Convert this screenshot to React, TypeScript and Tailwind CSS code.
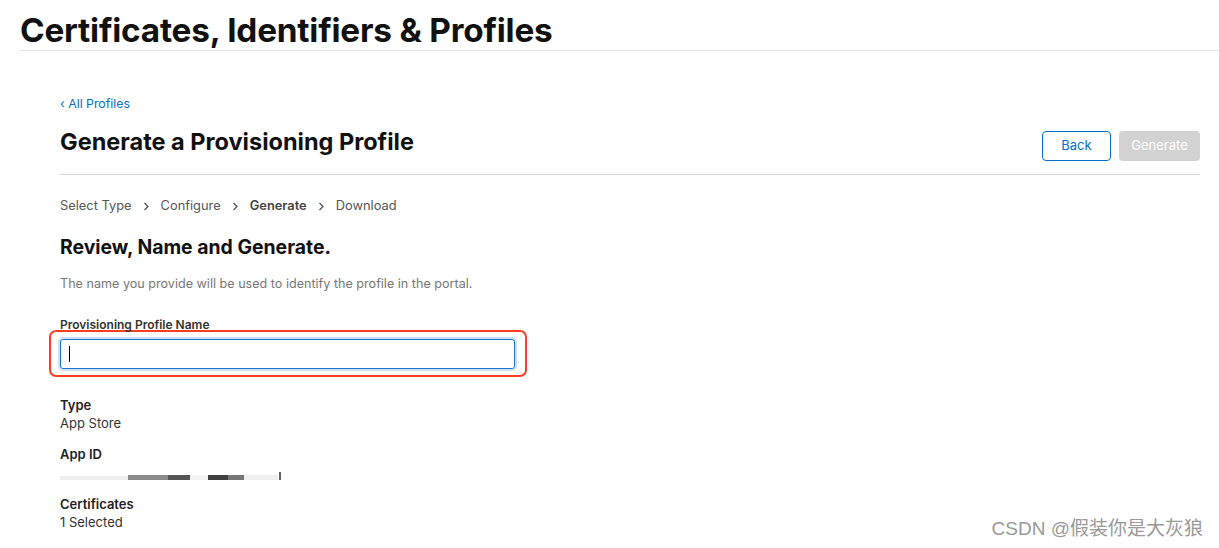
import React from "react";

function Chevron() {
  return (
    <svg width="7" height="9" viewBox="0 0 7 9" className="mx-[11px]" aria-hidden>
      <path d="M1.5 1 L5 4.5 L1.5 8" fill="none" stroke="#555" strokeWidth="1.3" />
    </svg>
  );
}

export default function App() {
  return (
    <div className="w-[1219px] h-[548px] bg-white overflow-hidden relative" style={{ fontFamily: "Inter, 'Noto Sans', sans-serif" }}>
      <div className="pl-[20px]">
        <h1 className="text-[33.3px] leading-[36px] font-bold text-[#111] pt-[12px] pb-[2px] tracking-[-0.2px]">
          Certificates, Identifiers &amp; Profiles
        </h1>
        <div className="h-px bg-[#e3e3e3]" />
      </div>

      <div className="ml-[60px] w-[1140px]">
        <div className="pt-[45px] text-[12.3px] leading-[16px] text-[#0070c9]">‹ All Profiles</div>
        <div className="flex items-center justify-between mt-[10px] pb-[12.5px] border-b border-[#d6d6d6]">
          <h2 className="text-[23.5px] leading-[30px] font-bold text-[#111]">Generate a Provisioning Profile</h2>
          <div className="flex gap-[8px] mt-[9px]">
            <button className="w-[69px] h-[30px] border border-[#0070c9] rounded-[4px] text-[#0070c9] text-[13px] bg-white">Back</button>
            <button className="w-[81px] h-[30px] rounded-[4px] bg-[#d2d2d2] text-white text-[13px]">Generate</button>
          </div>
        </div>

        <div className="flex items-center mt-[22.5px] text-[12.85px] leading-[18px] text-[#555]">
          <span>Select Type</span>
          <Chevron />
          <span>Configure</span>
          <Chevron />
          <span className="font-semibold text-[#444]">Generate</span>
          <Chevron />
          <span>Download</span>
        </div>

        <h3 className="mt-[20px] text-[19.4px] leading-[24px] font-bold text-[#111]">Review, Name and Generate.</h3>
        <p className="mt-[17px] text-[12.6px] leading-[16px] text-[#777]">The name you provide will be used to identify the profile in the portal.</p>

        <div className="mt-[25px] text-[12px] leading-[16px] font-semibold text-[#333]">Provisioning Profile Name</div>
        <div className="ml-[-11px] mt-[-3px] w-[478px] h-[47px] border-[2.5px] border-[#ff3d1f] rounded-[7px] flex items-center pl-[6.5px]">
          <div className="w-[459px] h-[34px] rounded-[5px] border-[2px] border-[#cfe1f4] flex">
            <div className="flex-1 border border-[#1a73c8] rounded-[3px] bg-white flex items-center pl-[8px]">
              <div className="w-px h-[16px] bg-black" />
            </div>
          </div>
        </div>

        <div className="mt-[19px] text-[13px] leading-[18px]">
          <div className="font-semibold text-[#222]">Type</div>
          <div className="text-[#333]">App Store</div>
          <div className="font-semibold text-[#222] mt-[13px]">App ID</div>
          <div className="h-[15px] relative">
            <div className="absolute left-0 top-[9px] flex items-end">
              <div className="w-[68px] h-[4px] bg-[#eeeeee]" />
              <div className="w-[40px] h-[5px] bg-[#8a8a8a]" />
              <div className="w-[22px] h-[5px] bg-[#555]" />
              <div className="w-[18px] h-[5px] bg-[#f3f3f3]" />
              <div className="w-[20px] h-[5px] bg-[#3f3f3f]" />
              <div className="w-[16px] h-[5px] bg-[#777]" />
              <div className="w-[34px] h-[5px] bg-[#f0f0f0]" />
              <div className="w-[2px] h-[8px] bg-[#666] ml-[1px]" />
            </div>
          </div>
          <div className="font-semibold text-[#222] mt-[17px]">Certificates</div>
          <div className="text-[#333]">1 Selected</div>
        </div>
      </div>

      <div className="absolute right-[16px] bottom-[8px] text-[19px] leading-[22px] text-[#999]" style={{ fontFamily: "'Liberation Sans', 'Noto Sans CJK SC', sans-serif" }}>
        CSDN @假装你是大灰狼
      </div>
    </div>
  );
}
